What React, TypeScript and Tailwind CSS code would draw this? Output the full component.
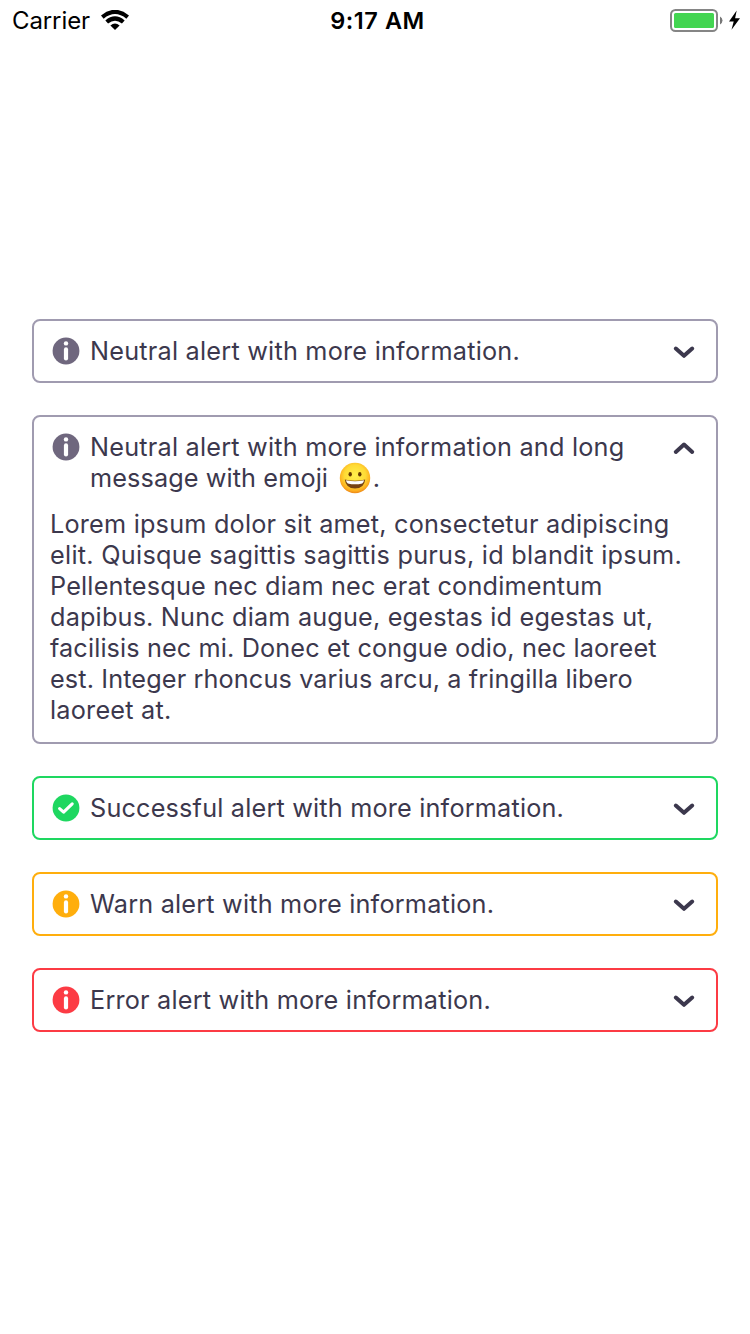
import React, { useState } from "react";

type Tone = "neutral" | "success" | "warn" | "error";

const borders: Record<Tone, string> = {
  neutral: "border-[#a09bb0]",
  success: "border-[#1ed760]",
  warn: "border-[#ffae0d]",
  error: "border-[#fc3b44]",
};

const fills: Record<Tone, string> = {
  neutral: "text-[#6f677e]",
  success: "text-[#1ed760]",
  warn: "text-[#ffae0d]",
  error: "text-[#fc3b44]",
};

function ToneIcon({ tone }: { tone: Tone }) {
  return (
    <svg viewBox="0 0 28 28" className={`mt-[1px] size-7 shrink-0 ${fills[tone]}`} aria-hidden="true">
      <circle cx="14" cy="14" r="13.4" fill="currentColor" />
      {tone === "success" ? (
        <path d="M7.6 14.6 L11.6 18.2 L20.2 9.8" fill="none" stroke="#fff" strokeWidth="3.1" strokeLinecap="round" strokeLinejoin="round" />
      ) : (
        <>
          <circle cx="14" cy="6.4" r="2.2" fill="#fff" />
          <path d="M14 12.4 V21.5" stroke="#fff" strokeWidth="4.2" strokeLinecap="round" />
        </>
      )}
    </svg>
  );
}

function Chevron({ open }: { open: boolean }) {
  return (
    <svg viewBox="0 0 24 24" className="mt-[4px] size-6 shrink-0" fill="none" stroke="#3c384d" strokeWidth="4" strokeLinecap="round" strokeLinejoin="round" aria-hidden="true">
      <path d={open ? "M3.8 15.9 L12 8.6 L20.2 15.9" : "M3.8 8.5 L12 15.8 L20.2 8.5"} />
    </svg>
  );
}

function Grin() {
  return (
    <svg viewBox="0 0 32 32" className="mr-[2px] ml-[3.5px] inline-block size-8 -mt-2 -mb-1 align-[-3px]" role="img" aria-label="😀">
      <defs>
        <radialGradient id="face" cx="0.5" cy="0.42" r="0.58">
          <stop offset="0" stopColor="#fff04c" />
          <stop offset="0.6" stopColor="#ffda35" />
          <stop offset="0.87" stopColor="#fdae20" />
          <stop offset="1" stopColor="#ec8718" />
        </radialGradient>
      </defs>
      <circle cx="16" cy="16" r="15.2" fill="url(#face)" />
      <ellipse cx="11.2" cy="12.2" rx="1.7" ry="2.3" fill="#643800" />
      <ellipse cx="20.8" cy="12.2" rx="1.7" ry="2.3" fill="#643800" />
      <path d="M5.8 17.4 Q16 20.1 26.2 17.4 Q25.2 26.5 16 26.5 Q6.8 26.5 5.8 17.4Z" fill="#774313" />
      <path d="M7 18.2 Q16 20.5 25 18.2 Q24.7 20.6 23.2 21.5 Q16 23.2 8.8 21.5 Q7.3 20.6 7 18.2Z" fill="#fff" />
    </svg>
  );
}

interface AlertProps {
  tone: Tone;
  title: React.ReactNode;
  spacing?: string;
  details?: { text: string; spacing: string }[];
  initiallyOpen?: boolean;
}

function Alert({ tone, title, spacing = "", details, initiallyOpen = false }: AlertProps) {
  const [open, setOpen] = useState(initiallyOpen);
  return (
    <section className={`rounded-lg border-2 ${borders[tone]} pt-[15px] pr-5 pl-4 ${open ? "pb-4" : "pb-[14px]"}`}>
      <button type="button" className="flex w-full items-start pl-[2px] text-left" aria-expanded={open} onClick={() => setOpen(!open)}>
        <ToneIcon tone={tone} />
        <span className={`ml-[10px] flex-1 whitespace-nowrap ${spacing}`}>{title}</span>
        <Chevron open={open} />
      </button>
      {open && details && (
        <p className="mt-[15px] whitespace-nowrap">
          {details.map((line) => (
            <span key={line.text} className={`block ${line.spacing}`}>{line.text}</span>
          ))}
        </p>
      )}
    </section>
  );
}

const lorem = [
  { text: "Lorem ipsum dolor sit amet, consectetur adipiscing", spacing: "tracking-[0.2px]" },
  { text: "elit. Quisque sagittis sagittis purus, id blandit ipsum.", spacing: "tracking-[0.275px]" },
  { text: "Pellentesque nec diam nec erat condimentum", spacing: "tracking-[0.18px]" },
  { text: "dapibus. Nunc diam augue, egestas id egestas ut,", spacing: "tracking-[0.17px]" },
  { text: "facilisis nec mi. Donec et congue odio, nec laoreet", spacing: "tracking-[0.12px]" },
  { text: "est. Integer rhoncus varius arcu, a fringilla libero", spacing: "tracking-[0.12px]" },
  { text: "laoreet at.", spacing: "tracking-[0.22px]" },
];

function StatusBar() {
  return (
    <header className="grid h-10 grid-cols-3 items-center pr-[9px] pl-3 text-[24px] leading-[38px] text-black">
      <div className="flex items-center">
        <span className="w-[77px] pt-[2px] tracking-[-0.1px]">Carrier</span>
        <svg viewBox="0 0 28 20" className="ml-3 h-5 w-7" aria-label="Wi-Fi">
          <g fill="none" stroke="#000" strokeWidth="4.2">
            <path d="M1.3 7.1 Q14 -3.3 26.7 7.1" />
            <path d="M5.7 12 Q14 4.9 22.3 12" />
          </g>
          <path d="M9.4 15.6 Q14 11.5 18.6 15.6 L14 20Z" />
        </svg>
      </div>
      <div className="pt-[2px] pl-[2px] text-center text-[23.5px] font-semibold tracking-[0.55px]">9:17 AM</div>
      <div className="flex items-center justify-end">
        <svg viewBox="0 0 72 24" className="h-6 w-[72px]" aria-label="Battery charging">
          <rect x="2" y="2" width="46" height="21" rx="4.5" fill="#fff" stroke="#858585" strokeWidth="2" />
          <rect x="5" y="5" width="40" height="15" rx="1.5" fill="#43d551" />
          <path d="M51 8.4 Q53.5 10 53.5 12.5 Q53.5 15 51 16.6Z" fill="#777" />
          <path d="M67.7 2.5 L60 13.5 H64.7 L62.5 21.8 L71 10.3 H66.1Z" />
        </svg>
      </div>
    </header>
  );
}

export default function App() {
  return (
    <div className="h-[1334px] w-[750px] overflow-hidden bg-white font-['Inter',sans-serif] text-[25.25px] leading-[31px] text-[#3c384d]">
      <StatusBar />
      <main className="flex flex-col gap-8 px-8 pt-[279px]">
        <Alert tone="neutral" spacing="tracking-[0.22px]" title="Neutral alert with more information." />
        <Alert
          tone="neutral"
          initiallyOpen
          details={lorem}
          title={
            <>
              <span className="block tracking-[0.21px]">Neutral alert with more information and long</span>
              <span className="block h-[31px] tracking-[0.1px]">message with emoji <Grin />.</span>
            </>
          }
        />
        <Alert tone="success" spacing="tracking-[0.18px]" title="Successful alert with more information." />
        <Alert tone="warn" spacing="tracking-[0.19px]" title="Warn alert with more information." />
        <Alert tone="error" spacing="tracking-[0.2px]" title="Error alert with more information." />
      </main>
    </div>
  );
}
